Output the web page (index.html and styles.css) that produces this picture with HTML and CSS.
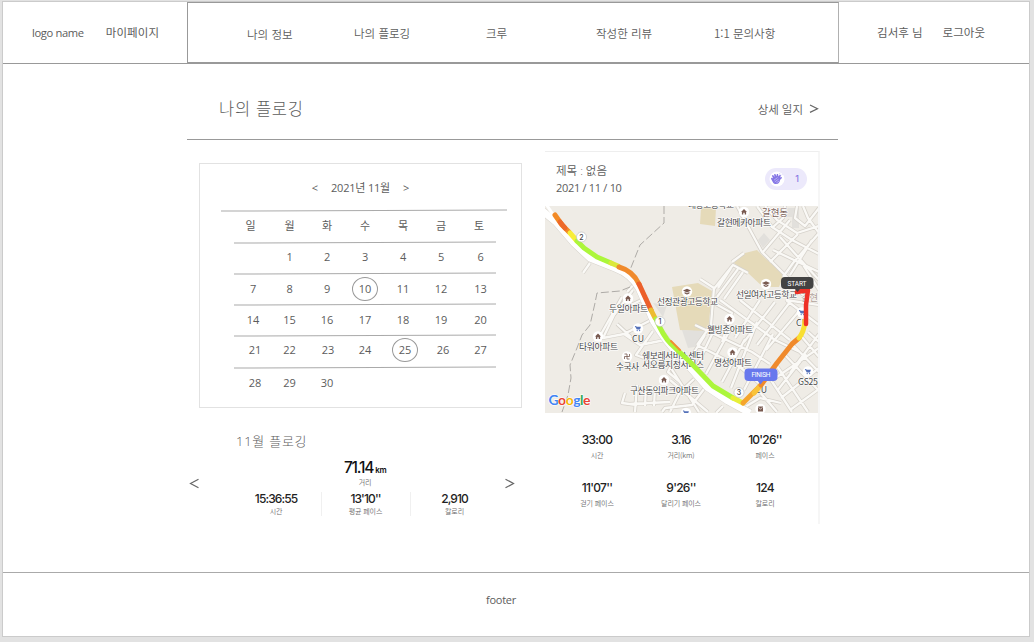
FILE: index.html
```html
<!DOCTYPE html>
<html lang="ko">
<head>
<meta charset="utf-8">
<title>나의 플로깅</title>
<link rel="stylesheet" href="styles.css">
</head>
<body>
<div class="page">
  <header class="header">
    <div class="brand"><span>logo name</span><b>마이페이지</b></div>
    <nav class="nav">
      <a class="low">나의 정보</a><a>나의 플로깅</a><a>크루</a><a>작성한 리뷰</a><a>1:1 문의사항</a>
    </nav>
    <div class="user"><b>김서후 님</b><b>로그아웃</b></div>
  </header>

  <main class="main">
    <div class="heading">
      <h1>나의 플로깅</h1>
      <a class="more">상세 일지 <svg width="10" height="10" viewBox="0 0 10 10"><path d="M1 1 8.5 4.7 1 8.4"/></svg></a>
    </div>
    <div class="columns">
      <section class="left">
        <div class="calendar">
          <div class="month"><span>&lt;</span><span>2021년 11월</span><span>&gt;</span></div>
          <div class="rule wide"></div>
          <div class="week days"><i>일</i><i>월</i><i>화</i><i>수</i><i>목</i><i>금</i><i>토</i></div>
          <div class="rule"></div>
          <div class="week w1"><i></i><i>1</i><i>2</i><i>3</i><i>4</i><i>5</i><i>6</i></div>
          <div class="rule"></div>
          <div class="week w2"><i>7</i><i>8</i><i>9</i><i><em>10</em></i><i>11</i><i>12</i><i>13</i></div>
          <div class="rule"></div>
          <div class="week w3"><i>14</i><i>15</i><i>16</i><i>17</i><i>18</i><i>19</i><i>20</i></div>
          <div class="rule"></div>
          <div class="week w4"><i>21</i><i>22</i><i>23</i><i>24</i><i><em>25</em></i><i>26</i><i>27</i></div>
          <div class="rule"></div>
          <div class="week w5"><i>28</i><i>29</i><i>30</i></div>
        </div>
        <h2>11월 플로깅</h2>
        <div class="carousel">
          <svg class="arrow" width="11" height="11" viewBox="0 0 11 11"><path d="M9.5 1.2 1.5 5.5l8 4.3"/></svg>
          <div class="summary">
            <div class="total"><strong>71.14</strong><span>km</span></div>
            <small>거리</small>
            <div class="trio">
              <div class="stat"><strong>15:36:55</strong><small>시간</small></div>
              <div class="stat"><strong>13'10''</strong><small>평균 페이스</small></div>
              <div class="stat"><strong>2,910</strong><small>칼로리</small></div>
            </div>
          </div>
          <svg class="arrow" width="11" height="11" viewBox="0 0 11 11"><path d="M1.5 1.2 9.5 5.5l-8 4.3"/></svg>
        </div>
      </section>

      <section class="record">
        <div class="record-head">
          <div class="meta"><div class="subject">제목 : 없음</div><div class="date">2021 / 11 / 10</div></div>
          <div class="pill">
            <svg width="16" height="16" viewBox="0 0 16 16"><circle cx="8" cy="8" r="7.5" fill="#fff"/><path d="M2.300 6.800 4 7.200 2.800 4.600l1.300-.6 1.500 2-.6-2.700 1.300-.4 1.300 2.400.2-2.300 1.200-.1.500 2.600 1.400-1.900 1 .7-.7 2.300 1.500-.6.300 1-1.800 1.700c-.4 2.400-1.600 4.100-3.800 4.300-1.900.1-3.100-.8-3.800-2.300L2 7.700Z" fill="#8677e6"/><path d="M10.500 2.800l.6-1M12.600 4l.9-.7M5 9.200l3.600-2.700M5.800 10.900l3.800-2.800M7.400 11.900l2.800-2" stroke="#c3bbf5" stroke-width=".8"/></svg>
            <span>1</span>
          </div>
        </div>
        <svg class="map" width="273" height="207" viewBox="545 206 273 207">
          <defs>
            <g id="house"><circle r="5.2" fill="#fff"/><path d="M0-3 3 0H2.1V2.6H.7V.8H-.7V2.6H-2.1V0H-3Z" fill="#795a50"/></g>
            <g id="school"><circle r="5.2" fill="#fff"/><path d="M0-2.8 4-1 0 .9-4-1ZM-2.4.6 0 1.8 2.4.6V2L0 3-2.4 2Z" fill="#795a50"/></g>
            <g id="cart"><circle r="5.2" fill="#fff"/><path d="M-3.2-2.5h1.4l.3.8h4.4L2 .9h-3.2Z" fill="#5471b9"/><circle cx="-.8" cy="2.1" r=".7" fill="#5471b9"/><circle cx="1.6" cy="2.1" r=".7" fill="#5471b9"/></g>
            <path id="streets" d="M737 206 762 252 785 275 803 295M757 206 772 227 792 240 819 254M765 206 777 220 797 233 819 226M803 206 808 218 819 233M773 250 819 272M819 233 793 263 783 277M790 220 763 252M780 237 807 267 819 280M798 234 770 262M812 240 790 275M785 206 783 218 773 227M797 206 795 218 805 226 819 208M713 290 733 265 748 273M717 297 738 269M724 299 743 272M732 262 744 253M731 268 718 288M800 260 819 290M700 279 714 288 711 325 697 345M714 303 732 313 722 342M720 300 775 340 800 352M740 300 790 340M695 325 752 352 770 364M697 345 740 367 760 384M705 335 688 362M716 326 696 368M730 330 706 374M745 339 722 382M757 322 731 388M773 334 744 390M760 300 735 338M775 302 744 342M790 302 757 345M800 310 766 350M819 305 786 300M786 300 819 325M808 332 819 342M802 337 819 357M793 345 819 372M785 355 819 391M777 366 808 412M769 377 792 412M758 390 777 412M745 407 760 398 781 403M771 381 819 348M781 398 819 368M790 410 819 389M806 354 777 391M819 334 790 373M637 281 627 292M648 297 631 305 611 313M622 297 600 336M633 290 614 315 603 338 624 334 655 318M624 334 640 345 665 340M617 324 631 337M653 331 636 355 655 362M677 354 668 372 680 382M660 355 645 368M669 365 685 390 699 412M694 379 680 392 670 412M704 389 692 405 665 408 662 412M625 393 622 403 637 405M637 385 635 412M646 386 645 406M655 388 654 406M670 380 708 412M723 406 716 413M629 404 670 402M590 263 583 273"/>
            <path id="highway" d="M540 209 556 222 574 243 590 258 615 268Q631 274 639 288L654 322Q666 342 681 357L707 387 728 401 750 413"/>
          </defs>
          <rect x="545" y="206" width="274" height="207" fill="#efece6"/>
          <g fill="#e5dab9">
            <path d="M701 208h15l-1 18-15-2Z"/>
            <path d="M734 263 741 254 757 250 765 258 784 274 779 287 763 287 748 273Z"/>
            <path d="M672 287 698 283 712 291 708 332 680 330Z"/>
          </g>
          <g fill="#e2e0dc"><path d="M758 240 764 233 770 240 763 248ZM786 208h13v20h-7v-11h-6ZM682 330l25 1-6 15-13 2ZM653 303l14 2-4 12Z"/></g>
          <g fill="none" stroke-linejoin="round">
            <use href="#streets" stroke="#d5d1ca" stroke-width="3.8"/>
            <use href="#streets" stroke="#faf9f6" stroke-width="2.3"/>
            <use href="#highway" stroke="#d8d4cd" stroke-width="8"/>
            <use href="#highway" stroke="#fff" stroke-width="7"/>
            <path d="M546 204 558 222" stroke="#fff" stroke-width="3"/>
            <path d="M664 206V223L640 245 630 270M630 287 620 291 597 293 595 303 590 325 582 335 577 348 570 365 571 378 568 395 562 412" stroke="#aeaba7" stroke-dasharray="8 3"/>
          </g>
          <g class="labels">
            <text x="688" y="208" textLength="46">태광고등학교</text>
            <text class="town" x="762" y="216" textLength="26">갈현동</text>
            <text x="717" y="226" textLength="54">갈현메카아파트</text>
            <text x="736" y="298" textLength="61">선일여자고등학교</text>
            <text class="town faint" x="801" y="301" textLength="17">갈현</text>
            <text x="657" y="305" textLength="61">선정관광고등학교</text>
            <text x="609" y="312" textLength="39">두일아파트</text>
            <text x="632" y="342" textLength="12">CU</text>
            <text x="579" y="350" textLength="39">타워아파트</text>
            <text x="616" y="370" textLength="23">수국사</text>
            <text x="642" y="358.500" textLength="62">쉐보레서비스센터</text>
            <text x="642" y="367.500" textLength="62">서오릉지정서비스</text>
            <text x="714" y="366" textLength="38">명성아파트</text>
            <text x="707" y="333" textLength="46">웰빙존아파트</text>
            <text x="630" y="394" textLength="69">구산동익파크아파트</text>
            <text x="796" y="326" textLength="12">CU</text>
            <text x="755" y="393" textLength="12">CU</text>
            <text x="798" y="385" textLength="20">GS25</text>
          </g>
          <use href="#house" x="744" y="212"/><use href="#house" x="628" y="298.500"/><use href="#house" x="598" y="336.500"/><use href="#house" x="664" y="380"/><use href="#house" x="732.500" y="352.500"/><use href="#house" x="729.500" y="319"/>
          <use href="#school" x="687" y="291.500"/><use href="#school" x="766" y="284"/>
          <use href="#cart" x="638" y="328.500"/><use href="#cart" x="802" y="312.500"/><use href="#cart" x="808" y="371.500"/><use href="#cart" x="686" y="413"/>
          <circle cx="627" cy="356.500" r="5.200" fill="#fff"/><path d="M624.500 359v-2.500h5v-2.500M624.500 354h2.500v5h2.500" fill="none" stroke="#795a50" stroke-width=".8"/>
          <circle cx="760.500" cy="409" r="5.200" fill="#fff"/><path d="M758 406.500h5v5h-5Z" fill="#795a50"/><path d="m758.500 407.500 2 1.500 2-1.500" stroke="#fff" stroke-width=".7" fill="none"/>
          <g class="route">
            <path d="M555 215 562 225 569 232" stroke="#f28a26"/>
            <path d="M560 222 565 228" stroke="#ed682a"/>
            <path d="M570 233 577 241" stroke="#f8ed38"/>
            <path d="M577 241 584 248 597 257 611 263" stroke="#acf63b"/>
            <path d="M611 263 618 266" stroke="#dbe83a"/>
            <path d="M619 267Q633 271 639 284" stroke="#f08a2c"/>
            <path d="M639 284 645 297 651 310" stroke="#ec602b"/>
            <path d="M651 310 655 318" stroke="#edbc31"/>
            <path d="M656 319Q663 336 671 344L690 362 713 386 733 398" stroke="#acf63b"/>
            <path d="M671 341 680 350" stroke="#f18d30" style="stroke-width:2"/>
            <path d="M733 398 743 403" stroke="#e7ef38"/>
            <path d="M743 403 760 386" stroke="#f5a52d"/>
            <path d="M754 393 760 386" stroke="#f9c33a"/>
            <path d="M761 385 777 363 792 344 799 338" stroke="#f08a2c"/>
            <path d="M799 338Q804 332 805 321" stroke="#f9df31"/>
            <path d="M806 324V305L808 290 797 292" stroke="#ee3026" style="stroke-width:4.500"/>
          </g>
          <g class="km">
            <circle cx="581.500" cy="237" r="5"/><circle cx="660" cy="321.500" r="5"/><circle cx="739" cy="392.500" r="5"/>
            <text x="581.500" y="239.500">2</text><text x="660" y="324">1</text><text x="739" y="395">3</text>
          </g>
          <g class="flag">
            <path d="M794 288h7l-3.500 4Z" fill="#424242"/><rect x="781" y="277" width="32.500" height="12" rx="4" fill="#424242"/>
            <text x="797" y="285.500" textLength="19">START</text>
            <path d="M757 380h7l-3.500 4.500Z" fill="#6878ed"/><rect x="744.500" y="368.500" width="33" height="12.500" rx="4" fill="#6878ed"/>
            <text x="761" y="377" textLength="19">FINISH</text>
          </g>
          <text class="google" x="548.500" y="404.500" textLength="42"><tspan fill="#4285f4">G</tspan><tspan fill="#ea4335">o</tspan><tspan fill="#f6b704">o</tspan><tspan fill="#4285f4">g</tspan><tspan fill="#34a853">l</tspan><tspan fill="#ea4335">e</tspan></text>
        </svg>
        <div class="results">
          <div class="stat"><strong>33:00</strong><small>시간</small></div>
          <div class="stat"><strong>3.16</strong><small>거리(km)</small></div>
          <div class="stat"><strong>10'26''</strong><small>페이스</small></div>
          <div class="stat"><strong>11'07''</strong><small>걷기 페이스</small></div>
          <div class="stat"><strong>9'26''</strong><small>달리기 페이스</small></div>
          <div class="stat"><strong>124</strong><small>칼로리</small></div>
        </div>
      </section>
    </div>
  </main>
  <footer class="footer">footer</footer>
</div>
</body>
</html>
```
FILE: styles.css
```css
* { box-sizing: border-box; }
body {
  margin: 0;
  height: 642px;
  padding: 1px 4px 5px 2px;
  overflow: hidden;
  background: #e2e2e2;
  color: #5c5c5c;
  font: 11.5px/16px "Open Sans", "Noto Sans CJK KR", sans-serif;
}
.page {
  height: 636px;
  display: flex;
  flex-direction: column;
  background: #fff;
  border: 1px solid #cbcbcb;
}
h1, h2 { margin: 0; font-weight: 300; }
i, em { font-style: normal; }
b { font-weight: 400; }

.header {
  display: grid;
  grid-template-columns: 184px 652px 1fr;
  height: 62px;
  border-bottom: 1px solid #999;
}
.brand { display: flex; gap: 22px; padding: 23px 0 0 29px; }
.brand span { font-size: 11.2px; letter-spacing: -.36px; }
.brand b { letter-spacing: .1px; }
.nav {
  display: grid;
  grid-template-columns: 107px 132px 110px 118px auto;
  padding: 22px 0 0 59px;
  border: 1px solid #999;
  border-right-color: #b0b0b0;
  font-family: "Noto Sans CJK KR", sans-serif;
  font-weight: 350;
}
.nav .low { padding-top: 1px; }
.user { display: flex; gap: 20px; padding: 23px 0 0 38px; letter-spacing: .05px; }

.main { width: 651px; margin-left: 184px; flex: 1; }
.heading {
  display: flex;
  justify-content: space-between;
  height: 76px;
  padding: 33px 19px 0 32px;
  border-bottom: 1px solid #999;
}
.heading h1 { font-size: 16.5px; line-height: 24px; letter-spacing: .75px; }
.more { display: flex; align-items: center; gap: 6px; height: 26px; font-weight: 350; }
.more svg { margin-top: -3px; }
.more path, .arrow path { fill: none; stroke: #666; stroke-width: 1.2; }

.columns { display: flex; }
.left { width: 358px; padding-top: 23px; }
.calendar {
  width: 323px;
  height: 245px;
  margin-left: 12px;
  border: 1px solid #e2e2e2;
  font-size: 11px;
  letter-spacing: -.1px;
}
.month { display: flex; justify-content: center; gap: 13px; height: 46px; padding-top: 16px; }
.month span:nth-child(2) { letter-spacing: -.2px; }
.rule { width: 262px; height: 1px; margin-left: 34px; background: #aaa; transform: rotate(-.22deg); }
.rule.wide { width: 286px; margin-left: 21px; }
.week {
  display: grid;
  grid-template-columns: 36px 37px 38px 38px 38px 38px 41px;
  align-items: center;
  text-align: center;
  height: 30px;
  margin-left: 35px;
}
.days { height: 31px; padding-bottom: 1px; }
.days i:first-child { margin-left: -5px; }
.days i:last-child { margin-left: -3px; }
.w1 { padding-bottom: 2px; }
.w4 { height: 31px; padding-bottom: 4px; }
.w4 i:first-child, .w5 i:first-child { margin-left: 4px; }
.w4 i:nth-child(5), .w4 i:nth-child(6) { margin-left: 4px; }
.w4 i:nth-child(3) { margin-left: 2px; }
em {
  display: inline-flex;
  align-items: center;
  justify-content: center;
  width: 26px;
  height: 24px;
  border: 1px solid #999;
  border-radius: 50%;
}

h2 { margin: 23px 0 0 49px; font-size: 13px; line-height: 20px; letter-spacing: .75px; }
.carousel { display: flex; align-items: center; width: 326px; height: 64px; margin-left: 2px; }
.summary { flex: 1; padding: 9px 0 0 26px; text-align: center; }
strong {
  display: block;
  color: #222;
  font: 450 12px/14px Inter, sans-serif;
  letter-spacing: -.75px;
}
small {
  display: block;
  color: #6c6c6c;
  font: 350 7px/10px "Noto Sans CJK KR", sans-serif;
  letter-spacing: -.1px;
}
.total { display: flex; justify-content: center; align-items: baseline; height: 18px; gap: 2px; color: #111; }
.total strong { font-size: 15.5px; line-height: 18px; letter-spacing: -1.15px; color: #111; }
.total span { font: 600 8px/10px Inter, sans-serif; letter-spacing: -.5px; }
.trio { display: grid; grid-template-columns: repeat(3, 89px); justify-content: center; margin-top: 5px; }
.trio strong { letter-spacing: -.9px; }
.trio .stat + .stat { border-left: 1px solid #f0f0f0; }

.record { width: 275px; height: 373px; margin-top: 11px; border-top: 1px solid #eee; border-right: 2px solid #f6f6f6; }
.record-head { display: flex; justify-content: space-between; height: 54px; padding: 11px 11px 0; font-weight: 350; }
.date { margin-top: 1px; font-size: 11px; font-weight: 400; letter-spacing: -.3px; }
.pill {
  display: flex;
  align-items: center;
  justify-content: space-between;
  width: 42px;
  height: 22px;
  margin-top: 5px;
  padding: 0 8px 0 4px;
  border-radius: 11px;
  background: #ece9fb;
  color: #8b7be4;
  font: 500 9px/12px Inter, sans-serif;
}
.map { display: block; }
.labels { fill: #464646; stroke: #fff; stroke-width: 1.2px; paint-order: stroke; font: 400 8.8px "Noto Sans CJK KR", sans-serif; }
.labels .town { fill: #7b625a; font-size: 9.5px; }
.labels .faint { opacity: .55; }
.route { fill: none; stroke-width: 5px; stroke-linecap: round; stroke-linejoin: round; }
.km circle { fill: #fff; stroke: #bbb; stroke-width: .6px; }
.km text { fill: #444; font: 500 7px Inter, sans-serif; text-anchor: middle; }
.flag text { fill: #fff; font: 400 6.5px Roboto, sans-serif; text-anchor: middle; }
.google { font: 700 14px Lato, sans-serif; stroke: #fff; stroke-width: 1.2px; paint-order: stroke; }
.results {
  display: grid;
  grid-template-columns: repeat(3, 84px);
  grid-auto-rows: 47.5px;
  margin-left: 10px;
  padding-top: 20px;
  text-align: center;
}
.results small { margin-top: 3px; }

.footer { height: 64px; padding-top: 19px; border-top: 1px solid #aaa; text-align: center; padding-right: 30px; font-size: 11px; letter-spacing: -.25px; }
```
